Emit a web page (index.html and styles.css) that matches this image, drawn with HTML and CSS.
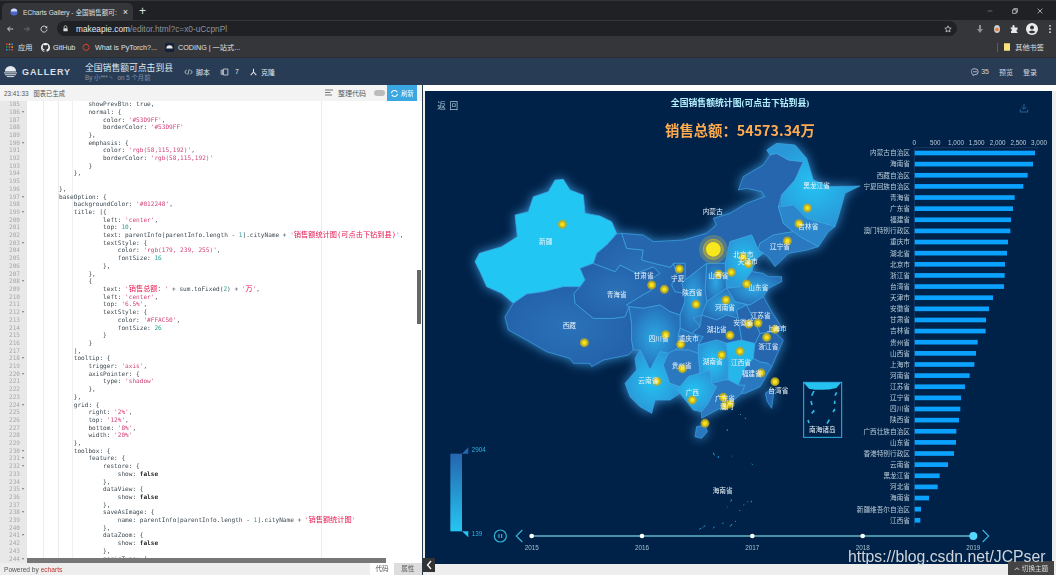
FILE: index.html
```html
<!DOCTYPE html>
<html lang="zh">
<head>
<meta charset="utf-8">
<title>ECharts Gallery</title>
<link rel="stylesheet" href="styles.css">
</head>
<body>
<div class="app">
  <div class="tabstrip">
    <div class="tab">
      <svg class="favicon" viewBox="0 0 10 10"><circle cx="5" cy="5" r="4.5" fill="#4a63c8"/><path d="M1 4.5a4 4 0 0 1 8 0" fill="#cfd8f5"/></svg>
      <span class="tab-title">ECharts Gallery - 全国销售额可:</span>
      <span class="tab-close">×</span>
    </div>
    <span class="tab-new">+</span>
    <div class="winctl">
      <svg viewBox="0 0 10 10"><path d="M2 5h6" stroke="#777" fill="none"/></svg>
      <svg viewBox="0 0 10 10"><path d="M2 3.5h4.5V8H2zM3.5 3.5V2H8v4.5H6.5" stroke="#ccc" fill="none"/></svg>
      <svg viewBox="0 0 10 10"><path d="M2 2l6 6M8 2l-6 6" stroke="#ccc" fill="none"/></svg>
    </div>
  </div>
  <div class="toolbar">
    <svg class="tb-ico" viewBox="0 0 10 10"><path d="M9 5H2M5 2L2 5l3 3" stroke="#dcdfe3" stroke-width="1.1" fill="none"/></svg>
    <svg class="tb-ico" viewBox="0 0 10 10"><path d="M1 5h7M5 2l3 3-3 3" stroke="#6f7276" stroke-width="1.1" fill="none"/></svg>
    <svg class="tb-ico" viewBox="0 0 10 10"><path d="M8.3 3.2A3.8 3.8 0 1 0 8.8 5.5" stroke="#dcdfe3" stroke-width="1.1" fill="none"/><path d="M9 1v3H6z" fill="#dcdfe3"/></svg>
    <div class="omnibox">
      <svg class="lock" viewBox="0 0 10 10"><path d="M3 4.5V3a2 2 0 0 1 4 0v1.5" stroke="#ddd" fill="none"/><rect x="2" y="4.5" width="6" height="4.5" rx=".6" fill="#ddd"/></svg>
      <span class="url"><b class="host">makeapie.com</b>/editor.html?c=x0-uCcpnPl</span>
      <svg class="star" viewBox="0 0 10 10"><path d="M5 1l1.2 2.7 2.8.3-2.1 1.9.6 2.8L5 7.2 2.500 8.700l.6-2.800L1 4l2.800-.3z" stroke="#ccc" fill="none"/></svg>
    </div>
    <div class="tb-right">
      <svg viewBox="0 0 10 10"><path d="M4 1h2v4h2L5 9 2 5h2z" fill="#8b8e92"/></svg>
      <svg viewBox="0 0 10 10"><ellipse cx="5" cy="5" rx="3" ry="4" fill="#c9ccd0"/><circle cx="5" cy="5.500" r="1.800" fill="#ee7b2f"/></svg>
      <svg viewBox="0 0 10 10"><path d="M1.500 3.500h2V2a1 1 0 0 1 2 0v1.500h3v2.200a1.100 1.100 0 0 0 0 2.200V9h-6.500V7a1 1 0 0 0 0-2z" fill="#e8e9eb"/></svg>
      <svg class="avatar" viewBox="0 0 12 12"><circle cx="6" cy="6" r="6" fill="#eceded"/><circle cx="6" cy="4.500" r="2" fill="#35363a"/><path d="M2.500 9a4 3 0 0 1 7 0 5 5 0 0 1-7 0z" fill="#35363a"/></svg>
      <svg viewBox="0 0 10 10"><circle cx="5" cy="1.800" r=".9" fill="#ddd"/><circle cx="5" cy="5" r=".9" fill="#ddd"/><circle cx="5" cy="8.200" r=".9" fill="#ddd"/></svg>
    </div>
  </div>
  <div class="bookmarks">
    <svg class="bm-ico apps" viewBox="0 0 9 9"><path d="M0 0h2v2H0z" fill="#e8453c"/><path d="M3.500 0h2v2h-2z" fill="#f4b400"/><path d="M7 0h2v2H7z" fill="#4285f4"/><path d="M0 3.500h2v2H0z" fill="#0f9d58"/><path d="M3.500 3.500h2v2h-2z" fill="#e8453c"/><path d="M7 3.500h2v2H7z" fill="#f4b400"/><path d="M0 7h2v2H0z" fill="#4285f4"/><path d="M3.500 7h2v2h-2z" fill="#0f9d58"/><path d="M7 7h2v2H7z" fill="#e8453c"/></svg>
    <span class="bm bm-apps">应用</span>
    <svg class="bm-ico gh" viewBox="0 0 16 16"><path fill="#f1f1f1" d="M8 0C3.580 0 0 3.580 0 8c0 3.540 2.290 6.530 5.470 7.590.4.070.55-.17.55-.38 0-.19-.01-.82-.01-1.490-2.010.37-2.530-.49-2.690-.94-.09-.23-.48-.94-.82-1.130-.28-.15-.68-.52-.01-.53.63-.01 1.080.58 1.230.82.72 1.210 1.870.87 2.330.66.07-.52.28-.87.51-1.070-1.780-.2-3.640-.89-3.640-3.950 0-.87.31-1.590.82-2.150-.08-.2-.36-1.020.08-2.120 0 0 .67-.21 2.200.82.64-.18 1.320-.27 2-.27.68 0 1.360.09 2 .27 1.530-1.040 2.200-.82 2.200-.82.44 1.100.16 1.920.08 2.120.51.56.82 1.270.82 2.150 0 3.070-1.870 3.750-3.650 3.950.29.25.54.73.54 1.480 0 1.070-.01 1.930-.01 2.200 0 .21.15.46.55.38A8.013 8.013 0 0016 8c0-4.420-3.580-8-8-8z"/></svg>
    <span class="bm bm-gh">GitHub</span>
    <svg class="bm-ico torch" viewBox="0 0 10 10"><circle cx="5" cy="5.500" r="3.800" stroke="#d8432b" stroke-width="1.200" fill="none"/><path d="M5 0l2 1.800-1 1z" fill="#d8432b"/></svg>
    <span class="bm bm-torch">What is PyTorch?...</span>
    <svg class="bm-ico coding" viewBox="0 0 10 10"><rect width="10" height="10" rx="1.500" fill="#16203a"/><path d="M1.500 6a3.500 3.500 0 0 1 7 0z" fill="#e8e8e8"/></svg>
    <span class="bm bm-coding">CODING | 一站式...</span>
    <div class="bm-other">
      <svg class="folder" viewBox="0 0 8 10"><path d="M0 0h8v10H0z" fill="#fbe27e"/></svg>
      <span class="bm">其他书签</span>
    </div>
  </div>
  <nav class="nav">
    <div class="logo">
      <svg class="logo-mark" viewBox="0 0 14 14"><path d="M1 7a6 6 0 0 1 12 0z" fill="#e6ebf0"/><path d="M0 8.500h14M1 10.500h12M3 12.500h8" stroke="#e6ebf0" stroke-width="1"/></svg>
      <span class="logo-text">GALLERY</span>
    </div>
    <div class="nav-title">
      <div class="nav-name">全国销售额可点击到县</div>
      <div class="nav-by">By 小***丶 &nbsp;on 5 个月前</div>
    </div>
    <div class="nav-act act-script">
      <svg viewBox="0 0 12 10"><path d="M3.500 2L1 5l2.500 3M8.500 2L11 5 8.500 8M7 1.500L5 8.500" stroke="#dfe5ec" fill="none"/></svg>
      <span>脚本</span>
    </div>
    <div class="nav-act act-fav">
      <svg viewBox="0 0 12 10"><path d="M1.500 2.500h2V8h-2zM4.500 1h6v8h-6z" stroke="#dfe5ec" fill="none"/></svg>
      <span>7</span>
    </div>
    <div class="nav-act act-clone">
      <svg viewBox="0 0 10 10"><path d="M5 1v4L1.500 9M5 5l3.500 4" stroke="#dfe5ec" stroke-width="1.300" fill="none"/></svg>
      <span>克隆</span>
    </div>
    <div class="nav-right">
      <span class="nav-comment">
        <svg viewBox="0 0 10 10"><path d="M5 1a4 3.700 0 0 1 0 7.400H4L2.500 9.500V8A4 3.700 0 0 1 5 1zM2.500 4.700h5" stroke="#cfd6df" fill="none"/></svg>35
      </span>
      <span>预览</span>
      <span>登录</span>
    </div>
  </nav>
  <main class="main">
    <section class="editor">
      <header class="ed-bar">
        <span class="ed-time">23:41:33</span>
        <span>图表已生成</span>
        <span class="ed-fmt">
          <svg viewBox="0 0 9 8"><path d="M0 1h8M0 3.500h5.500M0 6h7" stroke="#777" fill="none"/></svg>整理代码
        </span>
        <span class="ed-toggle"></span>
        <span class="ed-run">
          <svg viewBox="0 0 10 10"><path d="M1.500 4.500A3.500 3.500 0 0 1 8 3.500M8.500 5.500A3.500 3.500 0 0 1 2 6.500" stroke="#fff" stroke-width="1.200" fill="none"/></svg>刷新
        </span>
      </header>
      <div class="code">
        <div class="lines">
<div class="ln"><span class="no">185</span><span class="tx">                showPrevBtn: true,</span></div>
<div class="ln"><span class="no f">186</span><span class="tx">                normal: {</span></div>
<div class="ln"><span class="no">187</span><span class="tx">                    color: <i>'#53D9FF'</i>,</span></div>
<div class="ln"><span class="no">188</span><span class="tx">                    borderColor: <i>'#53D9FF'</i></span></div>
<div class="ln"><span class="no">189</span><span class="tx">                },</span></div>
<div class="ln"><span class="no f">190</span><span class="tx">                emphasis: {</span></div>
<div class="ln"><span class="no">191</span><span class="tx">                    color: <i>'rgb(58,115,192)'</i>,</span></div>
<div class="ln"><span class="no">192</span><span class="tx">                    borderColor: <i>'rgb(58,115,192)'</i></span></div>
<div class="ln"><span class="no">193</span><span class="tx">                }</span></div>
<div class="ln"><span class="no">194</span><span class="tx">            },</span></div>
<div class="ln"><span class="no">195</span><span class="tx"> </span></div>
<div class="ln"><span class="no">196</span><span class="tx">        },</span></div>
<div class="ln"><span class="no f">197</span><span class="tx">        baseOption: {</span></div>
<div class="ln"><span class="no">198</span><span class="tx">            backgroundColor: <i>'#012248'</i>,</span></div>
<div class="ln"><span class="no f">199</span><span class="tx">            title: [{</span></div>
<div class="ln"><span class="no">200</span><span class="tx">                    left: <i>'center'</i>,</span></div>
<div class="ln"><span class="no">201</span><span class="tx">                    top: <u>10</u>,</span></div>
<div class="ln"><span class="no">202</span><span class="tx">                    text: parentInfo[parentInfo.length - <u>1</u>].cityName + <i>'<em>销售额统计图(可点击下钻到县)</em>'</i>,</span></div>
<div class="ln"><span class="no f">203</span><span class="tx">                    textStyle: {</span></div>
<div class="ln"><span class="no">204</span><span class="tx">                        color: <i>'rgb(179, 239, 255)'</i>,</span></div>
<div class="ln"><span class="no">205</span><span class="tx">                        fontSize: <u>16</u></span></div>
<div class="ln"><span class="no">206</span><span class="tx">                    },</span></div>
<div class="ln"><span class="no">207</span><span class="tx">                },</span></div>
<div class="ln"><span class="no f">208</span><span class="tx">                {</span></div>
<div class="ln"><span class="no">209</span><span class="tx">                    text: <i>'<em>销售总额：</em>'</i> + sum.toFixed(<u>2</u>) + <i>'<em>万</em>'</i>,</span></div>
<div class="ln"><span class="no">210</span><span class="tx">                    left: <i>'center'</i>,</span></div>
<div class="ln"><span class="no">211</span><span class="tx">                    top: <i>'6.5%'</i>,</span></div>
<div class="ln"><span class="no f">212</span><span class="tx">                    textStyle: {</span></div>
<div class="ln"><span class="no">213</span><span class="tx">                        color: <i>'#FFAC50'</i>,</span></div>
<div class="ln"><span class="no">214</span><span class="tx">                        fontSize: <u>26</u></span></div>
<div class="ln"><span class="no">215</span><span class="tx">                    }</span></div>
<div class="ln"><span class="no">216</span><span class="tx">                }</span></div>
<div class="ln"><span class="no">217</span><span class="tx">            ],</span></div>
<div class="ln"><span class="no f">218</span><span class="tx">            tooltip: {</span></div>
<div class="ln"><span class="no">219</span><span class="tx">                trigger: <i>'axis'</i>,</span></div>
<div class="ln"><span class="no f">220</span><span class="tx">                axisPointer: {</span></div>
<div class="ln"><span class="no">221</span><span class="tx">                    type: <i>'shadow'</i></span></div>
<div class="ln"><span class="no">222</span><span class="tx">                },</span></div>
<div class="ln"><span class="no">223</span><span class="tx">            },</span></div>
<div class="ln"><span class="no f">224</span><span class="tx">            grid: {</span></div>
<div class="ln"><span class="no">225</span><span class="tx">                right: <i>'2%'</i>,</span></div>
<div class="ln"><span class="no">226</span><span class="tx">                top: <i>'12%'</i>,</span></div>
<div class="ln"><span class="no">227</span><span class="tx">                bottom: <i>'8%'</i>,</span></div>
<div class="ln"><span class="no">228</span><span class="tx">                width: <i>'20%'</i></span></div>
<div class="ln"><span class="no">229</span><span class="tx">            },</span></div>
<div class="ln"><span class="no f">230</span><span class="tx">            toolbox: {</span></div>
<div class="ln"><span class="no f">231</span><span class="tx">                feature: {</span></div>
<div class="ln"><span class="no f">232</span><span class="tx">                    restore: {</span></div>
<div class="ln"><span class="no">233</span><span class="tx">                        show: <b>false</b></span></div>
<div class="ln"><span class="no">234</span><span class="tx">                    },</span></div>
<div class="ln"><span class="no f">235</span><span class="tx">                    dataView: {</span></div>
<div class="ln"><span class="no">236</span><span class="tx">                        show: <b>false</b></span></div>
<div class="ln"><span class="no">237</span><span class="tx">                    },</span></div>
<div class="ln"><span class="no f">238</span><span class="tx">                    saveAsImage: {</span></div>
<div class="ln"><span class="no">239</span><span class="tx">                        name: parentInfo[parentInfo.length - <u>1</u>].cityName + <i>'<em>销售额统计图</em>'</i></span></div>
<div class="ln"><span class="no">240</span><span class="tx">                    },</span></div>
<div class="ln"><span class="no f">241</span><span class="tx">                    dataZoom: {</span></div>
<div class="ln"><span class="no">242</span><span class="tx">                        show: <b>false</b></span></div>
<div class="ln"><span class="no">243</span><span class="tx">                    },</span></div>
<div class="ln"><span class="no f">244</span><span class="tx">                    magicType: {</span></div>
        </div>
        <div class="vscroll"></div>
        <div class="hscroll"></div>
      </div>
      <footer class="ed-foot">
        <span class="powered">Powered by <a class="echarts">echarts</a></span>
        <span class="foot-tab active">代码</span>
        <span class="foot-tab">属性</span>
      </footer>
    </section>
    <div class="divider"></div>
    <section class="stage">
      <svg class="chart" viewBox="-15 3 1881 1419" role="img">
        <defs>
          <linearGradient id="vm" x1="0" y1="0" x2="0" y2="1">
            <stop offset="0" stop-color="#2565ae"/>
            <stop offset="1" stop-color="#25c6f2"/>
          </linearGradient>
          <radialGradient id="gd"><stop offset="0" stop-color="#2a72b9"/><stop offset="1" stop-color="#2463ac"/></radialGradient>
          <radialGradient id="gm"><stop offset="0" stop-color="#2ca8e4"/><stop offset="1" stop-color="#2670b8"/></radialGradient>
          <radialGradient id="gl"><stop offset="0" stop-color="#24c2f2"/><stop offset="1" stop-color="#2a98d8"/></radialGradient>
        </defs>
        <text class="back" x="22" y="56">返 回</text>
        <text class="title" x="930" y="47">全国销售额统计图(可点击下钻到县)</text>
        <text class="total" x="930" y="137">销售总额：54573.34万</text>
        <path class="dl" d="M1782 41v16M1775 51l7 7 7-7M1771 58v8h22v-8"/>

        <g class="land">
          <polygon class="p-xj" points="135,515 148,490 215,470 262,440 255,375 295,365 310,320 355,305 375,270 400,268 420,300 460,315 465,370 510,378 545,395 560,430 530,465 500,490 490,520 450,535 465,570 450,590 400,590 340,605 290,612 250,640 215,610 170,590 150,545"/>
          <polygon fill="url(#gd)" points="250,640 290,612 340,605 400,590 450,590 432,610 435,640 490,685 550,685 585,680 597,650 605,700 605,750 610,780 595,795 520,810 485,830 480,820 430,820 420,805 350,785 290,750 235,720 225,680"/>
          <polygon fill="url(#gd)" points="490,520 555,545 570,525 620,550 670,530 690,550 660,570 665,600 630,620 590,645 597,650 585,680 550,685 490,685 435,640 432,610 450,590 465,570 450,535"/>
          <polygon fill="url(#gd)" points="560,432 575,430 590,475 640,480 635,510 680,522 722,532 730,520 740,550 725,585 735,605 765,610 765,635 750,675 720,665 690,645 640,655 597,650 590,645 630,620 665,600 660,570 690,550 670,530 620,550 570,525 555,545 490,520 500,490 530,465"/>
          <polygon class="p-d1" points="575,430 640,435 670,455 760,450 830,430 860,405 850,385 900,370 950,340 1005,320 995,305 950,295 925,300 940,260 1000,225 1020,195 1040,190 1075,210 1120,215 1095,270 1055,315 1045,350 1060,400 1090,425 1030,435 990,460 985,480 965,435 900,455 890,520 830,520 765,570 765,520 730,520 722,532 680,522 635,510 640,480 590,475"/>
          <polygon fill="url(#gl)" points="1010,180 1040,160 1095,165 1130,205 1150,270 1200,290 1290,288 1245,310 1225,380 1215,410 1130,385 1090,345 1055,350 1055,315 1095,270 1120,215 1075,210 1040,190 1020,195"/>
          <polygon class="p-m2" points="1055,350 1090,345 1130,385 1215,410 1195,425 1165,470 1110,440 1090,425 1060,400 1045,350"/>
          <polygon class="p-m1" points="985,480 990,460 1030,435 1090,425 1110,440 1165,470 1130,480 1075,490 1035,530 1025,515 1010,495 1000,490"/>
          <polygon fill="url(#gl)" points="900,455 965,435 985,480 1000,490 975,510 965,545 930,590 890,595 885,520"/>
          <polygon fill="url(#gm)" points="830,520 885,520 890,595 830,635 825,600"/>
          <polygon fill="url(#gm)" points="890,595 930,590 965,545 1000,550 1015,560 1055,560 1055,575 1015,595 1000,620 960,645 915,635"/>
          <polygon fill="url(#gm)" points="830,635 890,595 915,635 950,645 920,660 925,685 890,675 860,690 815,675"/>
          <polygon fill="url(#gm)" points="830,520 825,600 830,635 815,675 790,685 810,710 785,730 750,715 750,675 765,635 765,610 755,580 765,570"/>
          <polygon class="p-d1" points="730,520 765,520 765,570 755,580 765,610 735,605 725,585 740,550"/>
          <polygon fill="url(#gm)" points="597,650 640,655 690,645 720,665 750,675 750,715 745,735 745,770 735,780 715,790 690,785 660,840 630,780 610,780 605,750 605,700"/>
          <polygon class="p-m1" points="750,715 785,730 810,710 820,740 805,765 805,790 775,780 735,780 745,770 745,735"/>
          <polygon fill="url(#gl)" points="585,880 620,840 615,805 630,780 660,840 690,785 715,790 700,825 720,880 750,890 750,910 720,930 675,930 665,970 630,950 600,920"/>
          <polygon class="p-m1" points="700,825 715,790 735,780 775,780 805,790 810,850 775,860 750,890 720,880"/>
          <polygon class="p-d1" points="785,730 810,710 815,675 860,690 890,675 925,685 935,750 890,760 860,750 805,765 820,740"/>
          <polygon fill="url(#gl)" points="805,765 860,750 890,760 895,815 895,870 885,870 845,880 840,840 810,850 805,790"/>
          <polygon class="p-l1" points="890,760 935,750 975,760 970,805 945,835 925,885 895,870 895,815"/>
          <polygon fill="url(#gl)" points="720,880 750,890 775,860 810,850 840,840 845,880 860,890 835,940 815,965 790,960 750,910"/>
          <polygon class="p-m1" points="845,880 885,870 895,870 925,885 945,885 935,910 900,940 850,965 815,985 815,965 835,940 860,890"/>
          <polygon class="p-m1" points="945,835 970,805 990,815 1015,820 1025,830 990,890 945,910 935,910 945,885 925,885"/>
          <polygon class="p-d1" points="975,760 990,730 1030,725 1060,750 1040,795 1025,830 1015,820 990,815 970,805"/>
          <polygon class="p-d1" points="925,685 920,660 950,645 970,685 990,730 975,760 935,750"/>
          <polygon class="p-d1" points="950,645 960,645 1000,620 1025,665 1050,705 1060,720 1030,725 990,730 970,685"/>
          <polygon class="p-m1" points="800,1010 825,1005 832,1025 815,1045 795,1040"/>
          <polygon class="p-d1" points="1020,900 1032,900 1025,955 1012,935 1006,910"/>
        </g>

        <g class="isles">
          <path d="M930 972l3 3M945 983l3 4M892 1018v5M850 1088l3 8M865 1098v6M905 1098l2 2M965 1122l3 2M905 1228l-3 7M940 1245l3-2M930 1260l-2 3M965 1232l-2 5M955 1234l-3 2M893 1250l-1 2M808 1318l6-4M825 1306l-5 6M853 1310l-3 5M880 1298l-3 4M900 1310l6-8M918 1293l-3 2"/>
        </g>

        <g class="inset">
          <rect x="1121" y="877" width="114" height="165"/>
          <path class="inset-sea" d="M1121 878h112l-14 16q-40 10-82 2z"/>
          <path class="inset-dash" d="M1152 903l-7 14M1220 907l-5 10M1143 933l3 12M1214 932v10M1153 961l-8 9M1215 957l-6 9M1134 990l3 9M1198 989l-7 12"/>
        </g>

        <g class="dots">
          <circle cx="397" cy="403"/><circle cx="463" cy="758"/><circle cx="665" cy="585"/><circle cx="703" cy="598"/><circle cx="748" cy="537"/><circle cx="798" cy="643"/><circle cx="866" cy="553"/><circle cx="904" cy="547"/><circle cx="939" cy="501"/><circle cx="955" cy="521"/><circle cx="950" cy="582"/><circle cx="888" cy="630"/><circle cx="956" cy="702"/><circle cx="984" cy="699"/><circle cx="1035" cy="718"/><circle cx="1010" cy="742"/><circle cx="900" cy="736"/><circle cx="930" cy="784"/><circle cx="875" cy="795"/><circle cx="707" cy="734"/><circle cx="752" cy="763"/><circle cx="757" cy="836"/><circle cx="681" cy="874"/><circle cx="787" cy="930"/><circle cx="825" cy="1000"/><circle cx="880" cy="922"/><circle cx="885" cy="947"/><circle cx="900" cy="942"/><circle cx="993" cy="849"/><circle cx="1035" cy="875"/><circle cx="1072" cy="453"/><circle cx="1107" cy="401"/><circle cx="1132" cy="354"/>
        </g>
        <g class="dot-big">
          <circle class="halo" cx="850" cy="478" r="43"/>
          <circle class="ring" cx="850" cy="478" r="30"/>
          <circle class="core" cx="850" cy="478" r="22"/>
        </g>

        <g class="labels">
          <text x="347" y="452">新疆</text><text x="848" y="363">内蒙古</text><text x="1160" y="284">黑龙江省</text><text x="1135" y="408">吉林省</text><text x="1050" y="468">辽宁省</text><text x="641" y="555">甘肃省</text><text x="743" y="565">宁夏</text><text x="940" y="491">北京市</text><text x="953" y="514">天津市</text><text x="865" y="555">山西省</text><text x="787" y="606">陕西省</text><text x="560" y="612">青海省</text><text x="885" y="651">河南省</text><text x="985" y="590">山东省</text><text x="992" y="674">江苏省</text><text x="940" y="697">安徽省</text><text x="418" y="706">西藏</text><text x="860" y="718">湖北省</text><text x="1040" y="715">上海市</text><text x="686" y="743">四川省</text><text x="776" y="744">重庆市</text><text x="1015" y="768">浙江省</text><text x="848" y="813">湖南省</text><text x="933" y="816">江西省</text><text x="755" y="825">贵州省</text><text x="965" y="848">福建省</text><text x="655" y="871">云南省</text><text x="787" y="906">广西</text><text x="1045" y="901">台湾省</text><text x="885" y="924">广东省</text><text x="890" y="948">澳门</text><text x="878" y="1201">海南省</text><text x="1177" y="1017">南海诸岛</text>
        </g>

        <rect class="vm-bar" x="61" y="1091" width="35" height="233" fill="url(#vm)"/>
        <polygon class="vm-top" points="96,1091 115,1072 115,1091"/>
        <polygon class="vm-bot" points="96,1324 115,1324 115,1342"/>
        <text class="vm-text" x="125" y="1085">2904</text>
        <text class="vm-text" x="125" y="1337">139</text>

        <g class="tl">
          <circle class="tl-play" cx="211" cy="1338" r="18"/>
          <path class="tl-play" d="M207 1332v12M215 1332v12"/>
          <path class="tl-chev" d="M277 1320l-18 18 18 18M1658 1320l18 18-18 18"/>
          <line class="tl-line" x1="305" y1="1338" x2="1630" y2="1338"/>
          <circle class="tl-pt" cx="305" cy="1338" r="7"/>
          <circle class="tl-pt" cx="636" cy="1338" r="7"/>
          <circle class="tl-pt" cx="967" cy="1338" r="7"/>
          <circle class="tl-pt" cx="1298" cy="1338" r="7"/>
          <circle class="tl-cur" cx="1630" cy="1338" r="12"/>
          <text x="305" y="1379">2015</text>
          <text x="636" y="1379">2016</text>
          <text x="967" y="1379">2017</text>
          <text x="1298" y="1379">2018</text>
          <text x="1630" y="1379">2019</text>
        </g>

        <g class="axis">
          <path class="axis-line" d="M1453 173H1825M1453 173V1310"/>
          <text x="1453" y="164">0</text><text x="1516" y="164">500</text><text x="1578" y="164">1,000</text><text x="1640" y="164">1,500</text><text x="1703" y="164">2,000</text><text x="1765" y="164">2,500</text><text x="1827" y="164">3,000</text>
        </g>
        <g class="cat">
          <text x="1440" y="196">内蒙古自治区</text><text x="1440" y="229">海南省</text><text x="1440" y="263">西藏自治区</text><text x="1440" y="296">宁夏回族自治区</text><text x="1440" y="330">青海省</text><text x="1440" y="363">广东省</text><text x="1440" y="396">福建省</text><text x="1440" y="430">澳门特别行政区</text><text x="1440" y="463">重庆市</text><text x="1440" y="497">湖北省</text><text x="1440" y="530">北京市</text><text x="1440" y="563">浙江省</text><text x="1440" y="597">台湾省</text><text x="1440" y="630">天津市</text><text x="1440" y="664">安徽省</text><text x="1440" y="697">甘肃省</text><text x="1440" y="730">吉林省</text><text x="1440" y="764">贵州省</text><text x="1440" y="797">山西省</text><text x="1440" y="830">上海市</text><text x="1440" y="864">河南省</text><text x="1440" y="897">江苏省</text><text x="1440" y="931">辽宁省</text><text x="1440" y="964">四川省</text><text x="1440" y="997">陕西省</text><text x="1440" y="1031">广西壮族自治区</text><text x="1440" y="1064">山东省</text><text x="1440" y="1098">香港特别行政区</text><text x="1440" y="1131">云南省</text><text x="1440" y="1164">黑龙江省</text><text x="1440" y="1198">河北省</text><text x="1440" y="1231">海南省</text><text x="1440" y="1265">新疆维吾尔自治区</text><text x="1440" y="1298">江西省</text>
        </g>
        <g class="bars">
          <rect x="1454" y="182" height="14" width="361"/><rect x="1454" y="215.400" height="14" width="355"/><rect x="1454" y="248.800" height="14" width="339"/><rect x="1454" y="282.200" height="14" width="326"/><rect x="1454" y="315.600" height="14" width="300"/><rect x="1454" y="349" height="14" width="295"/><rect x="1454" y="382.300" height="14" width="289"/><rect x="1454" y="415.700" height="14" width="287"/><rect x="1454" y="449.100" height="14" width="280"/><rect x="1454" y="482.500" height="14" width="277"/><rect x="1454" y="515.900" height="14" width="271"/><rect x="1454" y="549.300" height="14" width="270"/><rect x="1454" y="582.700" height="14" width="268"/><rect x="1454" y="616.100" height="14" width="235"/><rect x="1454" y="649.500" height="14" width="223"/><rect x="1454" y="682.900" height="14" width="214"/><rect x="1454" y="716.200" height="14" width="213"/><rect x="1454" y="749.600" height="14" width="189"/><rect x="1454" y="783" height="14" width="184"/><rect x="1454" y="816.400" height="14" width="179"/><rect x="1454" y="849.800" height="14" width="165"/><rect x="1454" y="883.200" height="14" width="151"/><rect x="1454" y="916.600" height="14" width="139"/><rect x="1454" y="950" height="14" width="137"/><rect x="1454" y="983.400" height="14" width="133"/><rect x="1454" y="1016.800" height="14" width="125"/><rect x="1454" y="1050.100" height="14" width="124"/><rect x="1454" y="1083.500" height="14" width="118"/><rect x="1454" y="1116.900" height="14" width="100"/><rect x="1454" y="1150.300" height="14" width="75"/><rect x="1454" y="1183.700" height="14" width="69"/><rect x="1454" y="1217.100" height="14" width="43"/><rect x="1454" y="1250.500" height="14" width="19"/><rect x="1454" y="1283.900" height="14" width="17"/>
        </g>
      </svg>
    </section>
    <button class="collapse"><svg viewBox="0 0 6 10"><path d="M5 1L1.500 5 5 9" stroke="#fff" stroke-width="1.300" fill="none"/></svg></button>
    <button class="theme"><svg viewBox="0 0 8 6"><path d="M1 5l3-3 3 3" stroke="#ddd" stroke-width="1.200" fill="none"/></svg>切换主题</button>
  </main>
</div>
<div class="watermark">https://blog.csdn.net/JCPser</div>
</body>
</html>
```
FILE: styles.css
```css
* { box-sizing: border-box; }
html, body { margin: 0; padding: 0; overflow: hidden; }
body {
  width: 1056px;
  height: 575px;
  position: relative;
  font-family: "Liberation Sans", "Noto Sans CJK SC", sans-serif;
  background: #eee;
}
.app {
  width: 1056px;
  height: 575px;
  display: flex;
  flex-direction: column;
  filter: blur(.35px);
}
svg { display: block; }

/* browser chrome */
.tabstrip {
  height: 20px;
  flex: none;
  display: flex;
  align-items: flex-end;
  background: #202124;
  border-top: 1px solid #333;
  padding-left: 2px;
}
.tab {
  width: 131px;
  height: 17px;
  background: #35363a;
  border-radius: 5px 5px 0 0;
  display: flex;
  align-items: center;
  padding: 0 5px 0 8px;
  color: #dfe1e5;
  font-size: 6.6px;
}
.favicon { width: 8px; height: 8px; margin-right: 5px; flex: none; }
.tab-title { flex: 1; white-space: nowrap; overflow: hidden; }
.tab-close { font-size: 9px; margin-left: 3px; color: #e8eaed; }
.tab-new { color: #dfe1e5; font-size: 12px; margin: 0 0 1px 6px; line-height: 16px; }
.winctl { margin-left: auto; height: 18px; display: flex; gap: 17px; padding-right: 12px; align-items: center; }
.winctl svg { width: 8px; height: 8px; }

.toolbar {
  height: 17px;
  flex: none;
  background: #35363a;
  display: flex;
  align-items: center;
  padding-left: 6px;
  gap: 9px;
}
.tb-ico { width: 8px; height: 8px; flex: none; }
.omnibox {
  width: 900px;
  height: 15px;
  background: #202124;
  border-radius: 8px;
  display: flex;
  align-items: center;
  padding: 0 5px;
  flex: none;
}
.lock { width: 7px; height: 7px; margin-right: 7px; }
.url { color: #8e9297; font-size: 8.300px; flex: 1; white-space: nowrap; }
.host { color: #e8eaed; font-weight: 400; }
.star { width: 8px; height: 8px; }
.tb-right { display: flex; gap: 7px; align-items: center; margin-left: 9px; }
.tb-right svg { width: 10px; height: 10px; }
.tb-right .avatar { width: 12px; height: 12px; }

.bookmarks {
  height: 21px;
  flex: none;
  background: #35363a;
  border-bottom: 1px solid #2b2c2f;
  display: flex;
  align-items: center;
  padding: 0 12px 0 6px;
  color: #dfe1e5;
  font-size: 7.200px;
}
.bm-ico { flex: none; }
.apps { width: 7px; height: 8px; margin-right: 5px; }
.bm-apps { width: 23px; }
.gh { width: 9px; height: 9px; margin-right: 3px; }
.bm-gh { width: 29px; }
.torch { width: 8px; height: 8px; margin-right: 5px; }
.bm-torch { width: 70px; }
.coding { width: 9px; height: 9px; margin-right: 4px; }
.bm-other { margin-left: auto; display: flex; align-items: center; gap: 5px; border-left: 1px solid #5a5b5e; padding-left: 6px; height: 9px; }
.folder { width: 6px; height: 8px; }

/* site nav */
.nav {
  height: 27px;
  flex: none;
  background: #293c55;
  display: flex;
  align-items: center;
  color: #dfe5ec;
  padding: 0 19px 0 4px;
}
.logo { display: flex; align-items: center; gap: 5px; width: 81px; }
.logo-mark { width: 13px; height: 13px; }
.logo-text { font-size: 9px; font-weight: 700; letter-spacing: .9px; color: #d9dfe6; }
.nav-title { width: 99px; }
.nav-name { font-size: 8.800px; line-height: 12px; color: #dfe5ec; }
.nav-by { font-size: 6.300px; line-height: 8px; color: #8595aa; }
.nav-act { display: flex; align-items: center; gap: 3px; font-size: 7px; }
.nav-act svg { width: 9px; height: 8px; }
.act-script { width: 36px; }
.act-fav { width: 29px; }
.act-fav span { margin-left: 3px; }
.nav-right { margin-left: auto; display: flex; gap: 10px; align-items: center; font-size: 7px; color: #cfd6df; }
.nav-comment { display: flex; align-items: center; gap: 2px; }
.nav-comment svg { width: 8px; height: 8px; }

/* main area */
.main {
  flex: 1;
  min-height: 0;
  display: flex;
  position: relative;
}
.editor {
  width: 421.500px;
  flex: none;
  display: flex;
  flex-direction: column;
  background: #fff;
}
.ed-bar {
  height: 16px;
  flex: none;
  display: flex;
  align-items: center;
  background: #f3f3f3;
  color: #555;
  font-size: 6.300px;
  padding-left: 4px;
}
.ed-time { margin-right: 5px; }
.ed-fmt { margin-left: auto; display: flex; align-items: center; gap: 4px; margin-right: 8px; font-size: 7px; }
.ed-fmt svg { width: 9px; height: 8px; }
.ed-toggle { width: 11px; height: 6px; background: #bbb; border-radius: 3px; margin-right: 2px; }
.ed-run {
  width: 30px;
  height: 16px;
  margin-right: 4.500px;
  background: #3aa7e0;
  color: #fff;
  display: flex;
  align-items: center;
  justify-content: center;
  gap: 2px;
}
.ed-run svg { width: 9px; height: 9px; }
.code {
  flex: 1;
  min-height: 0;
  position: relative;
  overflow: hidden;
  background:
    linear-gradient(#ececec, #ececec) 321px 0 / 1px 100% no-repeat,
    linear-gradient(#ececec, #ececec) 43px 0 / 1px 100% no-repeat,
    linear-gradient(#ececec, #ececec) 58px 0 / 1px 100% no-repeat,
    linear-gradient(#f0f0f0, #f0f0f0) 72px 0 / 1px 100% no-repeat,
    linear-gradient(#e8e8e8, #e8e8e8) 0 0 / 27px 100% no-repeat,
    #fff;
}
.lines { margin-top: -.9px; }
.ln {
  display: flex;
  height: 7.710px;
  line-height: 7.710px;
  font-family: "DejaVu Sans Mono", "Noto Sans CJK SC", monospace;
  font-size: 6.100px;
  color: #3f4a52;
}
.no {
  width: 27px;
  flex: none;
  padding-right: 7px;
  text-align: right;
  color: #a8a8a8;
  position: relative;
}
.no.f::after {
  content: "";
  position: absolute;
  left: 22px;
  top: 3px;
  border: 1.500px solid transparent;
  border-top: 2px solid #777;
}
.tx { white-space: pre; padding-left: 2.700px; }
.tx i { font-style: normal; color: #d4457c; }
.tx u { text-decoration: none; color: #2aa198; }
.tx b { font-weight: 700; color: #222; }
.tx em { font-style: normal; font-size: 7.200px; color: #e6154f; }
.vscroll { position: absolute; left: 416.700px; top: 169px; width: 4.800px; height: 54px; background: #666; }
.hscroll { position: absolute; left: 27px; bottom: 0; width: 359px; height: 5px; background: #777; }
.ed-foot {
  height: 12px;
  flex: none;
  display: flex;
  align-items: center;
  background: #eee;
  font-size: 6.600px;
  color: #555;
}
.powered { margin-left: 4px; flex: 1; }
.echarts { color: #c23531; }
.foot-tab { width: 24px; height: 12px; line-height: 12px; text-align: center; background: #ddd; }
.foot-tab.active { background: #fff; }
.foot-tab:last-child { width: 27.500px; }
.divider { width: 1.500px; flex: none; background: #2a3a4c; }
.stage {
  flex: 1;
  min-width: 0;
  padding: 6px 4px 11px 2px;
  background: linear-gradient(#fff 6px, #eee 6px);
}
.chart {
  width: 627px;
  height: 473px;
  background: #012248;
}
.collapse {
  position: absolute;
  left: 423px;
  bottom: 3px;
  width: 12px;
  height: 14px;
  padding: 0 3px;
  border: 0;
  background: #333;
}
.collapse svg { width: 6px; height: 10px; }
.theme {
  position: absolute;
  right: 2px;
  bottom: 0;
  width: 46px;
  height: 14px;
  border: 0;
  padding: 0;
  background: #444;
  color: #ddd;
  font: 6.600px "Liberation Sans", "Noto Sans CJK SC", sans-serif;
  display: flex;
  align-items: center;
  justify-content: center;
  gap: 2px;
}
.theme svg { width: 6px; height: 5px; }

/* chart (user units are 1/3 px) */
.chart text { font-family: "Noto Sans CJK SC", "Liberation Sans", sans-serif; }
.chart .back { font-family: "Liberation Serif", "Noto Sans CJK SC", serif; font-size: 26px; fill: #a9c6d6; letter-spacing: 2px; }
.chart .title { font-family: "Liberation Serif", "Noto Sans CJK SC", serif; font-size: 26.500px; font-weight: 700; fill: #b3efff; text-anchor: middle; }
.chart .total { font-size: 43px; font-weight: 700; fill: #ffac50; text-anchor: middle; }
.dl { fill: none; stroke: #2b6fa5; stroke-width: 2.500; }

.land { filter: drop-shadow(0 0 16px rgba(70, 170, 245, .8)); }
.land polygon { stroke: #3ea8e6; stroke-width: 2; stroke-linejoin: round; }
.p-xj { fill: #22c6f2; }
.p-d1 { fill: #2566ae; }
.p-m1 { fill: #2a78bf; }
.p-m2 { fill: #2b86cb; }
.p-l1 { fill: #25b6ea; }
.isles path { fill: none; stroke: #2399d6; stroke-width: 3; }
.inset rect { fill: none; stroke: #2db8ea; stroke-width: 3; }
.inset-sea { fill: #25c2f0; }
.inset-dash { fill: none; stroke: #2db8ea; stroke-width: 5; }

.dots circle { r: 10px; fill: #f6e21c; stroke: rgba(190, 170, 30, .8); stroke-width: 7; }
.dot-big .halo { fill: rgba(190, 175, 60, .3); }
.dot-big .ring { fill: rgba(190, 175, 60, .55); stroke: #b9aa3a; stroke-width: 3; }
.dot-big .core { fill: #f8e71c; }

.labels text { font-size: 20px; fill: #eaf3fa; text-anchor: middle; dominant-baseline: central; }
.vm-top { fill: #2565ae; }
.vm-bot { fill: #25c6f2; }
.chart .vm-text { font-size: 19px; fill: #2bb5e0; font-family: "Liberation Sans", sans-serif; }
.tl-play { fill: none; stroke: #33b5d8; stroke-width: 3.500; }
.tl-chev { fill: none; stroke: #38b6de; stroke-width: 3.500; }
.tl-line { stroke: #62b5c6; stroke-width: 5; }
.tl-pt { fill: #fff; }
.tl-cur { fill: #53d9ff; }
.chart .tl text { font-family: "Liberation Sans", sans-serif; font-size: 19px; fill: #a4c2cf; text-anchor: middle; }
.axis-line { fill: none; stroke: #1d3f69; stroke-width: 2.500; }
.chart .axis text { font-family: "Liberation Sans", sans-serif; font-size: 19px; fill: #b9cbd8; text-anchor: middle; }
.cat text { font-size: 20px; fill: #b9cbd8; text-anchor: end; }
.bars rect { fill: #0aa1ff; }

.watermark {
  position: absolute;
  left: 848px;
  top: 547px;
  font-size: 15.800px;
  line-height: 20px;
  color: #cfd5db;
  white-space: nowrap;
}
```
